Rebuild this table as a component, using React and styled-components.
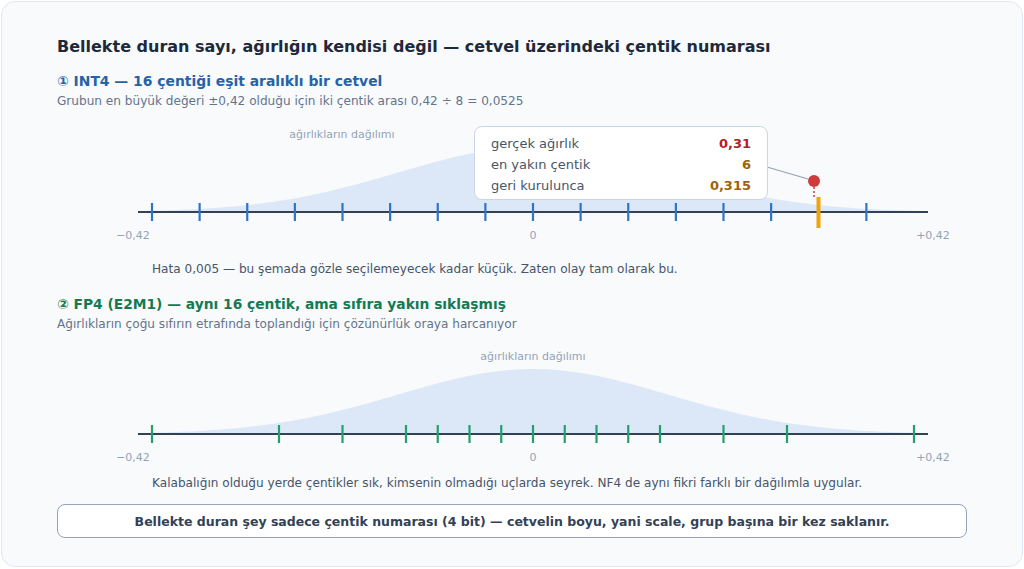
import React from "react";
import styled, { createGlobalStyle } from "styled-components";

const Global = createGlobalStyle`
  html, body { margin: 0; padding: 0; background: #ffffff; }
  body { font-family: "DejaVu Sans", "Noto Sans", sans-serif; }
  * { box-sizing: border-box; }
`;

const Card = styled.div`
  width: 1022px;
  height: 566px;
  margin: 1px;
  border: 1px solid #e2e8f0;
  border-radius: 14px;
  background: #f8fafc;
  padding-top: 35px;
  overflow: hidden;
`;

const Title = styled.h1`
  margin: 0;
  padding: 0 55px;
  font-size: 16px;
  line-height: 20px;
  font-weight: 700;
  color: #1e293b;
`;

const Heading = styled.h2`
  margin: ${(p) => p.$top}px 0 0;
  padding: 0 55px;
  font-size: ${(p) => p.$size || 14}px;
  line-height: 18px;
  font-weight: 700;
  color: ${(p) => p.$color};
`;

const Sub = styled.p`
  margin: 3px 0 0;
  padding: 0 55px;
  font-size: 12.1px;
  line-height: 16px;
  color: #64748b;
`;

const Figure = styled.div`
  position: relative;
  width: 1020px;
  height: 128px;
  margin-top: ${(p) => p.$top}px;
  svg { display: block; }
`;

const Caption = styled.p`
  margin: ${(p) => p.$top}px 0 0;
  padding: 0 0 0 150px;
  font-size: 12.1px;
  line-height: 16px;
  color: #475569;
`;

const Callout = styled.div`
  position: absolute;
  left: 472px;
  top: 7px;
  width: 294px;
  padding: 6px 16px 3px 16px;
  background: #ffffff;
  border: 1px solid #cbd5e1;
  border-radius: 8px;
  display: grid;
  grid-template-columns: 1fr auto;
  grid-auto-rows: 21px;
  align-items: center;
  font-size: 13px;
`;

const CLabel = styled.span`
  color: #475569;
`;

const CValue = styled.span`
  font-weight: 700;
  text-align: right;
  color: ${(p) => p.$color};
`;

const Note = styled.div`
  margin: 13px 55px 0;
  height: 34px;
  border: 1.5px solid #94a3b8;
  border-radius: 8px;
  background: #ffffff;
  display: flex;
  align-items: center;
  justify-content: center;
  font-size: 12.5px;
  font-weight: 700;
  color: #334155;
`;

const LINE_Y = 93;
const X0 = 533;

function bellPath() {
  const pts = [];
  for (let x = 138; x <= 928; x += 4) {
    const y = LINE_Y - 65 * Math.exp(-((x - X0) ** 2) / (2 * 135 * 135));
    pts.push(`${x},${y.toFixed(2)}`);
  }
  return `M138,${LINE_Y} L${pts.join(" L")} L928,${LINE_Y} Z`;
}

function Ruler({ ticks, tickColor, labelX, children }) {
  return (
    <svg width="1020" height="128" viewBox="2 0 1020 128">
      <path d={bellPath()} fill="#dce8f7" />
      <text x={labelX} y="16" textAnchor="middle" dominantBaseline="middle" fontSize="11" fill="#94a3b8" fontFamily="DejaVu Sans, sans-serif">
        ağırlıkların dağılımı
      </text>
      <line x1="138" y1={LINE_Y} x2="928" y2={LINE_Y} stroke="#334155" strokeWidth="2" />
      {ticks.map((x, i) => (
        <line key={i} x1={x} y1={LINE_Y - 9} x2={x} y2={LINE_Y + 9} stroke={tickColor} strokeWidth="2.2" />
      ))}
      {[
        [133, "−0,42"],
        [533, "0"],
        [933, "+0,42"],
      ].map(([x, t]) => (
        <text key={t} x={x} y="117" textAnchor="middle" dominantBaseline="middle" fontSize="11" fill="#94a3b8" fontFamily="DejaVu Sans, sans-serif">
          {t}
        </text>
      ))}
      {children}
    </svg>
  );
}

const intTicks = Array.from({ length: 16 }, (_, i) => X0 + (i - 8) * 47.625);
const fpTicks = [-6, -4, -3, -2, -1.5, -1, -0.5, 0, 0.5, 1, 1.5, 2, 3, 4, 6].map((v) => X0 + v * 63.5);

export default function App() {
  return (
    <>
      <Global />
      <Card>
        <Title>Bellekte duran sayı, ağırlığın kendisi değil — cetvel üzerindeki çentik numarası</Title>

        <Heading $top={15} $color="#2563a8" $size={13.9}>① INT4 — 16 çentiği eşit aralıklı bir cetvel</Heading>
        <Sub>Grubun en büyük değeri ±0,42 olduğu için iki çentik arası 0,42 ÷ 8 = 0,0525</Sub>
        <Figure $top={10}>
          <Ruler ticks={intTicks.filter((_, i) => i !== 14)} tickColor="#2f74c8" labelX={342}>
            <line x1="767" y1="48" x2="808" y2="60" stroke="#94a3b8" strokeWidth="1.2" />
            <line x1="814" y1="68" x2="814" y2="78" stroke="#d03a3a" strokeWidth="1.5" strokeDasharray="2 2" />
            <rect x="816.5" y="78" width="4" height="31" fill="#f0a30a" />
            <circle cx="814" cy="62" r="6" fill="#d03a3a" />
          </Ruler>
          <Callout>
            <CLabel>gerçek ağırlık</CLabel>
            <CValue $color="#b91c1c">0,31</CValue>
            <CLabel>en yakın çentik</CLabel>
            <CValue $color="#a16207">6</CValue>
            <CLabel>geri kurulunca</CLabel>
            <CValue $color="#a16207">0,315</CValue>
          </Callout>
        </Figure>
        <Caption $top={14}>Hata 0,005 — bu şemada gözle seçilemeyecek kadar küçük. Zaten olay tam olarak bu.</Caption>

        <Heading $top={18} $color="#157a52" $size={13.8}>② FP4 (E2M1) — aynı 16 çentik, ama sıfıra yakın sıklaşmış</Heading>
        <Sub>Ağırlıkların çoğu sıfırın etrafında toplandığı için çözünürlük oraya harcanıyor</Sub>
        <Figure $top={9}>
          <Ruler ticks={fpTicks} tickColor="#22a06b" labelX={533} />
        </Figure>
        <Caption $top={6}>Kalabalığın olduğu yerde çentikler sık, kimsenin olmadığı uçlarda seyrek. NF4 de aynı fikri farklı bir dağılımla uygular.</Caption>

        <Note>Bellekte duran şey sadece çentik numarası (4 bit) — cetvelin boyu, yani scale, grup başına bir kez saklanır.</Note>
      </Card>
    </>
  );
}
